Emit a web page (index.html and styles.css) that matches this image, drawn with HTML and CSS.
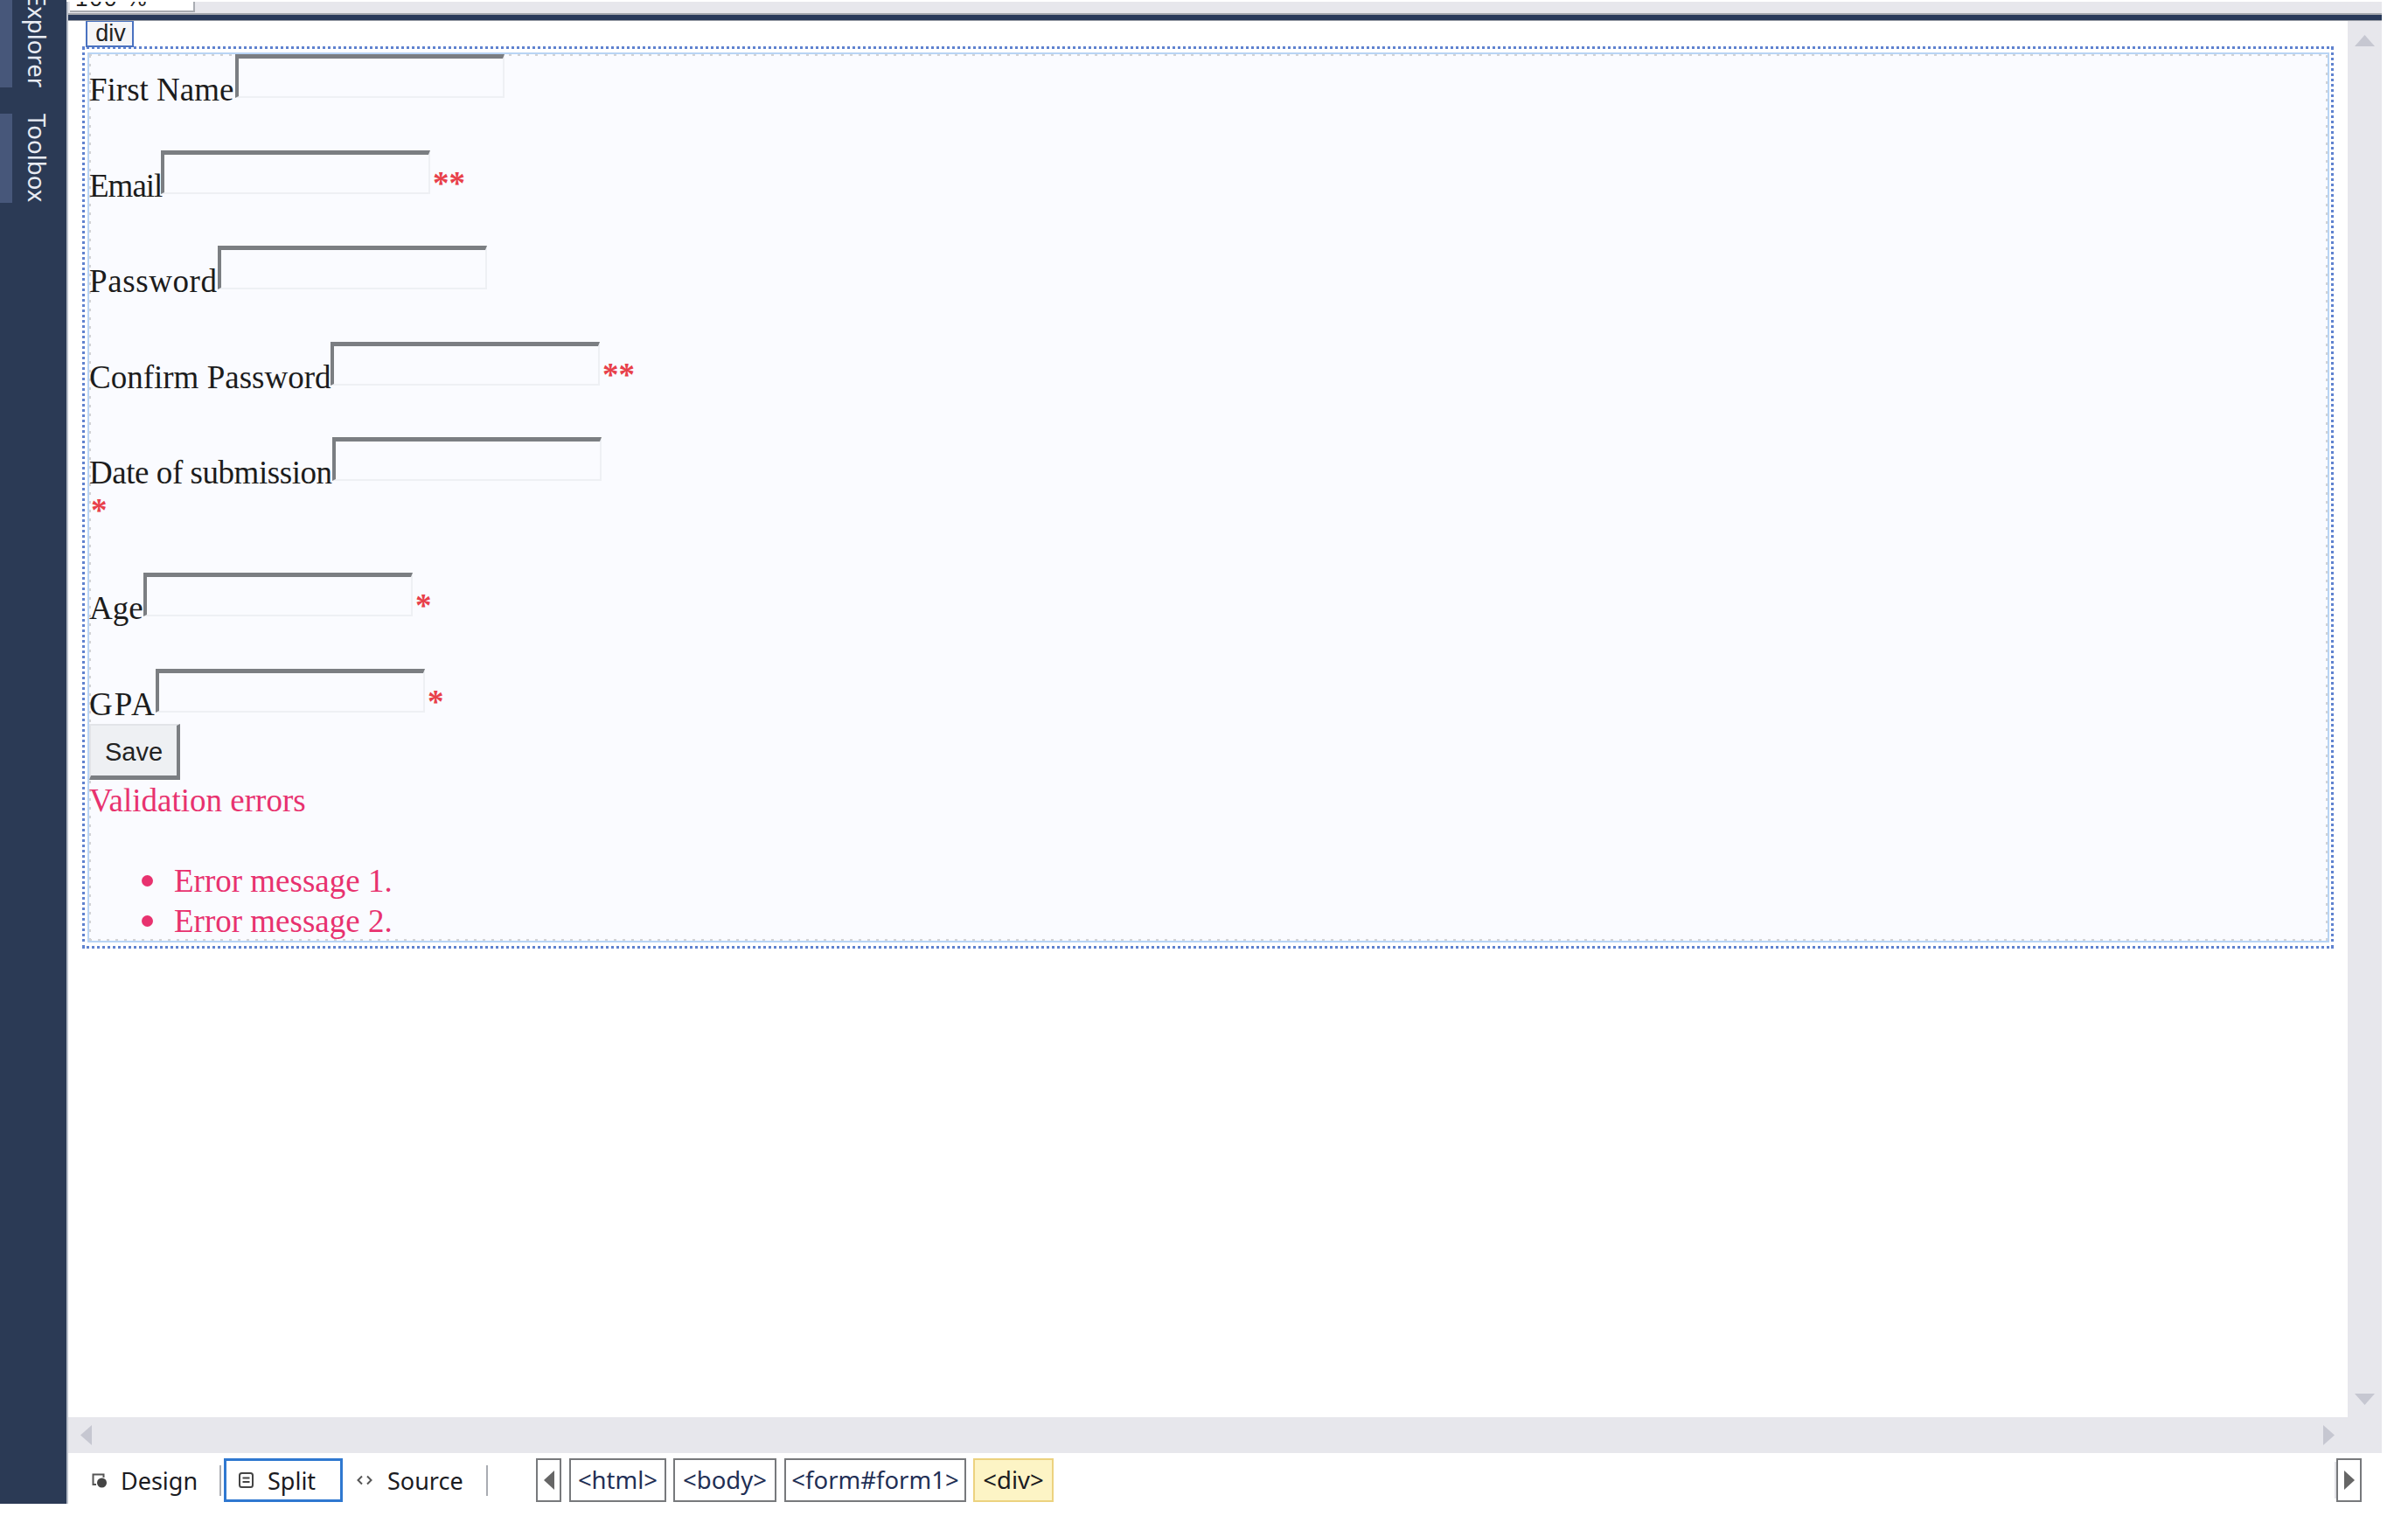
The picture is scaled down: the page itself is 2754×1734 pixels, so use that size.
FILE: index.html
```
<!DOCTYPE html>
<html lang="en">
<head>
<meta charset="utf-8">
<title>Web form designer</title>
<link rel="stylesheet" href="styles.css">
</head>
<body>
<div class="shell">
  <aside class="sidebar">
    <div class="side-tab side-explorer">Explorer</div>
    <div class="side-tab side-toolbox">Toolbox</div>
  </aside>
  <main class="main">
    <div class="toolbar">
      <div class="zoom-box"><span class="zoom-text">100 %</span></div>
    </div>
    <div class="middle">
      <div class="canvas">
        <div class="selection">
          <span class="div-tag">div</span>
          <form class="form">
            <div class="row row-a"><label class="label w-first">First Name</label><input class="field" type="text"></div>
            <div class="row row-b"><label class="label w-email">Email</label><input class="field" type="text"><span class="star">**</span></div>
            <div class="row row-a"><label class="label w-pass">Password</label><input class="field" type="text"></div>
            <div class="row row-b"><label class="label w-confirm">Confirm Password</label><input class="field" type="text"><span class="star">**</span></div>
            <div class="row"><label class="label w-date">Date of submission</label><input class="field" type="text"></div>
            <div class="star-line"><span class="star">*</span></div>
            <div class="row row-c"><label class="label w-age">Age</label><input class="field" type="text"><span class="star">*</span></div>
            <div class="row"><label class="label w-gpa">GPA</label><input class="field" type="text"><span class="star">*</span></div>
            <button class="save" type="button">Save</button>
            <div class="errors-title">Validation errors</div>
            <ul class="errors">
              <li class="error">Error message 1.</li>
              <li class="error">Error message 2.</li>
            </ul>
          </form>
        </div>
      </div>
      <div class="vscroll">
        <svg class="arrow" width="23" height="13" viewBox="0 0 23 13"><polygon points="11.5,0 23,13 0,13"/></svg>
        <svg class="arrow" width="23" height="13" viewBox="0 0 23 13"><polygon points="0,0 23,0 11.5,13"/></svg>
      </div>
    </div>
    <div class="hscroll">
      <svg class="arrow" width="13" height="23" viewBox="0 0 13 23"><polygon points="13,0 13,23 0,11.5"/></svg>
      <svg class="arrow" width="13" height="23" viewBox="0 0 13 23"><polygon points="0,0 13,11.5 0,23"/></svg>
    </div>
    <div class="status">
      <div class="tab tab-design">
        <svg class="icon" width="18" height="17" viewBox="0 0 18 17"><path d="M9 1.5H1.5V13H5" fill="none" stroke="#555" stroke-width="2"/><path d="M9 1.5h4.5V5" fill="none" stroke="#555" stroke-width="2"/><circle cx="11.5" cy="11" r="5.5" fill="#444"/></svg>
        <span>Design</span>
      </div>
      <div class="sep"></div>
      <div class="tab tab-split">
        <svg class="icon" width="17" height="18" viewBox="0 0 17 18"><rect x="1" y="1" width="15" height="16" rx="2.5" fill="none" stroke="#444" stroke-width="2"/><path d="M4.5 6.5h8M4.5 11h8" stroke="#444" stroke-width="2"/></svg>
        <span>Split</span>
      </div>
      <div class="tab tab-source">
        <svg class="icon" width="18" height="12" viewBox="0 0 18 12"><path d="M6 1.5 1.5 6 6 10.5M12 1.5 16.5 6 12 10.5" fill="none" stroke="#555" stroke-width="2"/></svg>
        <span>Source</span>
      </div>
      <div class="sep"></div>
      <div class="crumb crumb-nav">
        <svg width="12" height="22" viewBox="0 0 12 22"><polygon points="12,0 12,22 0,11" fill="#666"/></svg>
      </div>
      <div class="crumb c-html">&lt;html&gt;</div>
      <div class="crumb c-body">&lt;body&gt;</div>
      <div class="crumb c-form">&lt;form#form1&gt;</div>
      <div class="crumb c-div">&lt;div&gt;</div>
      <div class="status-end">
        <div class="crumb crumb-next">
          <svg width="12" height="22" viewBox="0 0 12 22"><polygon points="0,0 12,11 0,22" fill="#666"/></svg>
        </div>
      </div>
    </div>
  </main>
</div>
</body>
</html>
```

FILE: styles.css
```
* { box-sizing: border-box; }

html, body {
  margin: 0;
  padding: 0;
  background: #ffffff;
}

body {
  width: 2754px;
  height: 1734px;
  overflow: hidden;
}

.shell {
  display: grid;
  grid-template-columns: 76px 2648px;
  width: 2724px;
  height: 1718px;
  margin-top: 2px;
}

.sidebar {
  background: #2b3a55;
  display: flex;
  flex-direction: column;
  gap: 30px;
  margin-top: -2px;
}

.side-tab {
  writing-mode: vertical-rl;
  width: 76px;
  flex: none;
  border-left: 14px solid #47577a;
  padding-right: 19px;
  font: 27.5px/30px "Noto Sans", sans-serif;
  color: #e8ebf2;
  white-space: nowrap;
  overflow: hidden;
}

.side-explorer {
  display: flex;
  justify-content: flex-end;
  height: 100px;
}

.side-toolbox { height: 102px; }

.main {
  display: flex;
  flex-direction: column;
  border-left: 2px solid #b9bfca;
  min-width: 0;
}

.toolbar {
  height: 22px;
  flex: none;
  background: linear-gradient(to bottom, #e7e7ec 0 13px, #a4a7ad 13px 15px, #293a5a 15px 21px, #9a9ea6 21px 22px);
  padding-left: 2px;
}

.zoom-box {
  width: 143px;
  height: 12px;
  background: #ffffff;
  border-right: 2px solid #a9acb2;
  border-bottom: 2px solid #a9acb2;
  overflow: hidden;
}

.zoom-text {
  display: block;
  margin: -19px 0 0 6px;
  font: 26px/30px "Liberation Sans", sans-serif;
  letter-spacing: 2px;
  color: #222222;
}

.middle {
  flex: 1;
  display: flex;
  min-height: 0;
}

.canvas {
  flex: 1;
  background: #ffffff;
  padding: 29px 16px 0 16px;
  min-width: 0;
}

.selection {
  position: relative;
  width: 2575px;
  height: 1032px;
  border: 3px dotted #5f82cf;
  padding: 4px 2px 5px 3px;
}

.div-tag {
  position: absolute;
  left: 1px;
  top: -32px;
  width: 55px;
  height: 30px;
  background: #f6f6f8;
  border: 2px solid #4a72c0;
  border-top-width: 1px;
  padding-left: 2px;
  font: 27px/26px "Liberation Sans", sans-serif;
  color: #222222;
  text-align: center;
}

.form {
  height: 1018px;
  border: 2px solid #b8d4f4;
  background-color: #fafbff;
  background-image:
    repeating-linear-gradient(90deg, #d2d3d6 0 3px, transparent 3px 10px),
    repeating-linear-gradient(90deg, #d2d3d6 0 3px, transparent 3px 10px),
    repeating-linear-gradient(0deg, #d2d3d6 0 3px, transparent 3px 10px),
    repeating-linear-gradient(0deg, #d2d3d6 0 3px, transparent 3px 10px);
  background-size: 100% 2px, 100% 2px, 2px 100%, 2px 100%;
  background-position: top left, bottom left, top left, top right;
  background-repeat: no-repeat;
  font: 37px/40px "Liberation Serif", serif;
  color: #1c1c1c;
}

.row {
  display: flex;
  align-items: flex-start;
  height: 50px;
}

.row-a, .row-b { margin-bottom: 59.5px; }
.row-c { margin-bottom: 60px; }

.label {
  align-self: flex-end;
  flex: none;
  height: 40px;
  margin-bottom: -11px;
  white-space: nowrap;
}

.w-first { width: 167px; }
.w-email { width: 82px; letter-spacing: -1px; }
.w-pass { width: 147px; letter-spacing: 0.6px; }
.w-confirm { width: 276px; }
.w-date { width: 278px; letter-spacing: -0.45px; }
.w-age { width: 62px; }
.w-gpa { width: 76px; letter-spacing: 2px; }

.field {
  flex: none;
  width: 308px;
  height: 50px;
  margin: 0;
  padding: 0;
  background: transparent;
  border-style: solid;
  border-color: #7b7e82 #eef0f4 #eef0f4 #7b7e82;
  border-width: 5px 2px 2px 4px;
  border-radius: 0;
}

.star {
  margin: 18px 0 0 3px;
  color: #e8404a;
  font-weight: 700;
}

.star-line {
  height: 105px;
  padding-top: 14px;
}

.star-line .star { margin: 0 0 0 2px; }

.save {
  display: block;
  width: 104px;
  height: 64px;
  margin: 13px 0 0;
  padding: 3px 0 0;
  background: #eef0f3;
  border-style: solid;
  border-color: #e2e4e8 #7b7e82 #7b7e82 #e2e4e8;
  border-width: 2px 4px 5px 2px;
  border-radius: 0;
  font: 29px/1 "Liberation Sans", sans-serif;
  color: #222222;
}

.errors-title {
  height: 46px;
  padding-top: 1px;
  font-size: 37px;
  line-height: 46px;
  color: #e8326f;
}

.errors {
  margin: 47px 0 0;
  padding: 0 0 0 97px;
  line-height: 46px;
  color: #e8326f;
  list-style: none;
}

.error { position: relative; }

.error::before {
  content: "";
  position: absolute;
  left: -37px;
  top: 16px;
  width: 13px;
  height: 13px;
  border-radius: 50%;
  background: #e8326f;
}

.vscroll {
  flex: none;
  width: 39px;
  background: #e7e7ec;
  display: flex;
  flex-direction: column;
  justify-content: space-between;
  align-items: center;
  padding: 16px 0 14px;
}

.arrow { display: block; fill: #c6c7d1; }

.hscroll {
  flex: none;
  height: 41px;
  background: #e7e7ec;
  display: flex;
  justify-content: space-between;
  align-items: center;
  padding: 0 54px 0 14px;
}

.status {
  flex: none;
  height: 58px;
  display: flex;
  align-items: center;
  padding-top: 4px;
  background: #ffffff;
  font: 27px/1 "Noto Sans", sans-serif;
  color: #1b1b1f;
}

.tab {
  flex: none;
  display: flex;
  align-items: center;
  height: 50px;
}

.icon { flex: none; }

.tab-design {
  width: 146px;
  margin-left: 27px;
  gap: 15px;
}

.sep {
  flex: none;
  width: 2px;
  height: 35px;
  background: #a9acb2;
}

.tab-split {
  width: 136px;
  margin-left: 3px;
  padding-left: 14px;
  gap: 16px;
  border: 3px solid #2f78d0;
}

.tab-source {
  width: 164px;
  padding-left: 16px;
  gap: 17px;
}

.crumb {
  flex: none;
  display: flex;
  align-items: center;
  justify-content: center;
  height: 50px;
  margin-left: 8px;
  border: 2px solid #77797c;
  background: #ffffff;
  color: #1f2f55;
  font-size: 27.5px;
}

.crumb-nav {
  width: 29px;
  margin-left: 55px;
}

.c-html { width: 111px; margin-left: 9px; }
.c-body { width: 118px; }
.c-form { width: 208px; margin-left: 9px; }

.c-div {
  width: 92px;
  background: #fdf4c5;
  border-color: #ecd27f;
  color: #1b1b1f;
}

.status-end {
  margin-left: auto;
  padding-right: 23px;
  display: flex;
}

.crumb-next {
  width: 29px;
  margin-left: 0;
  box-shadow: -6px 0 0 -4px #e2e2e6;
}
```
